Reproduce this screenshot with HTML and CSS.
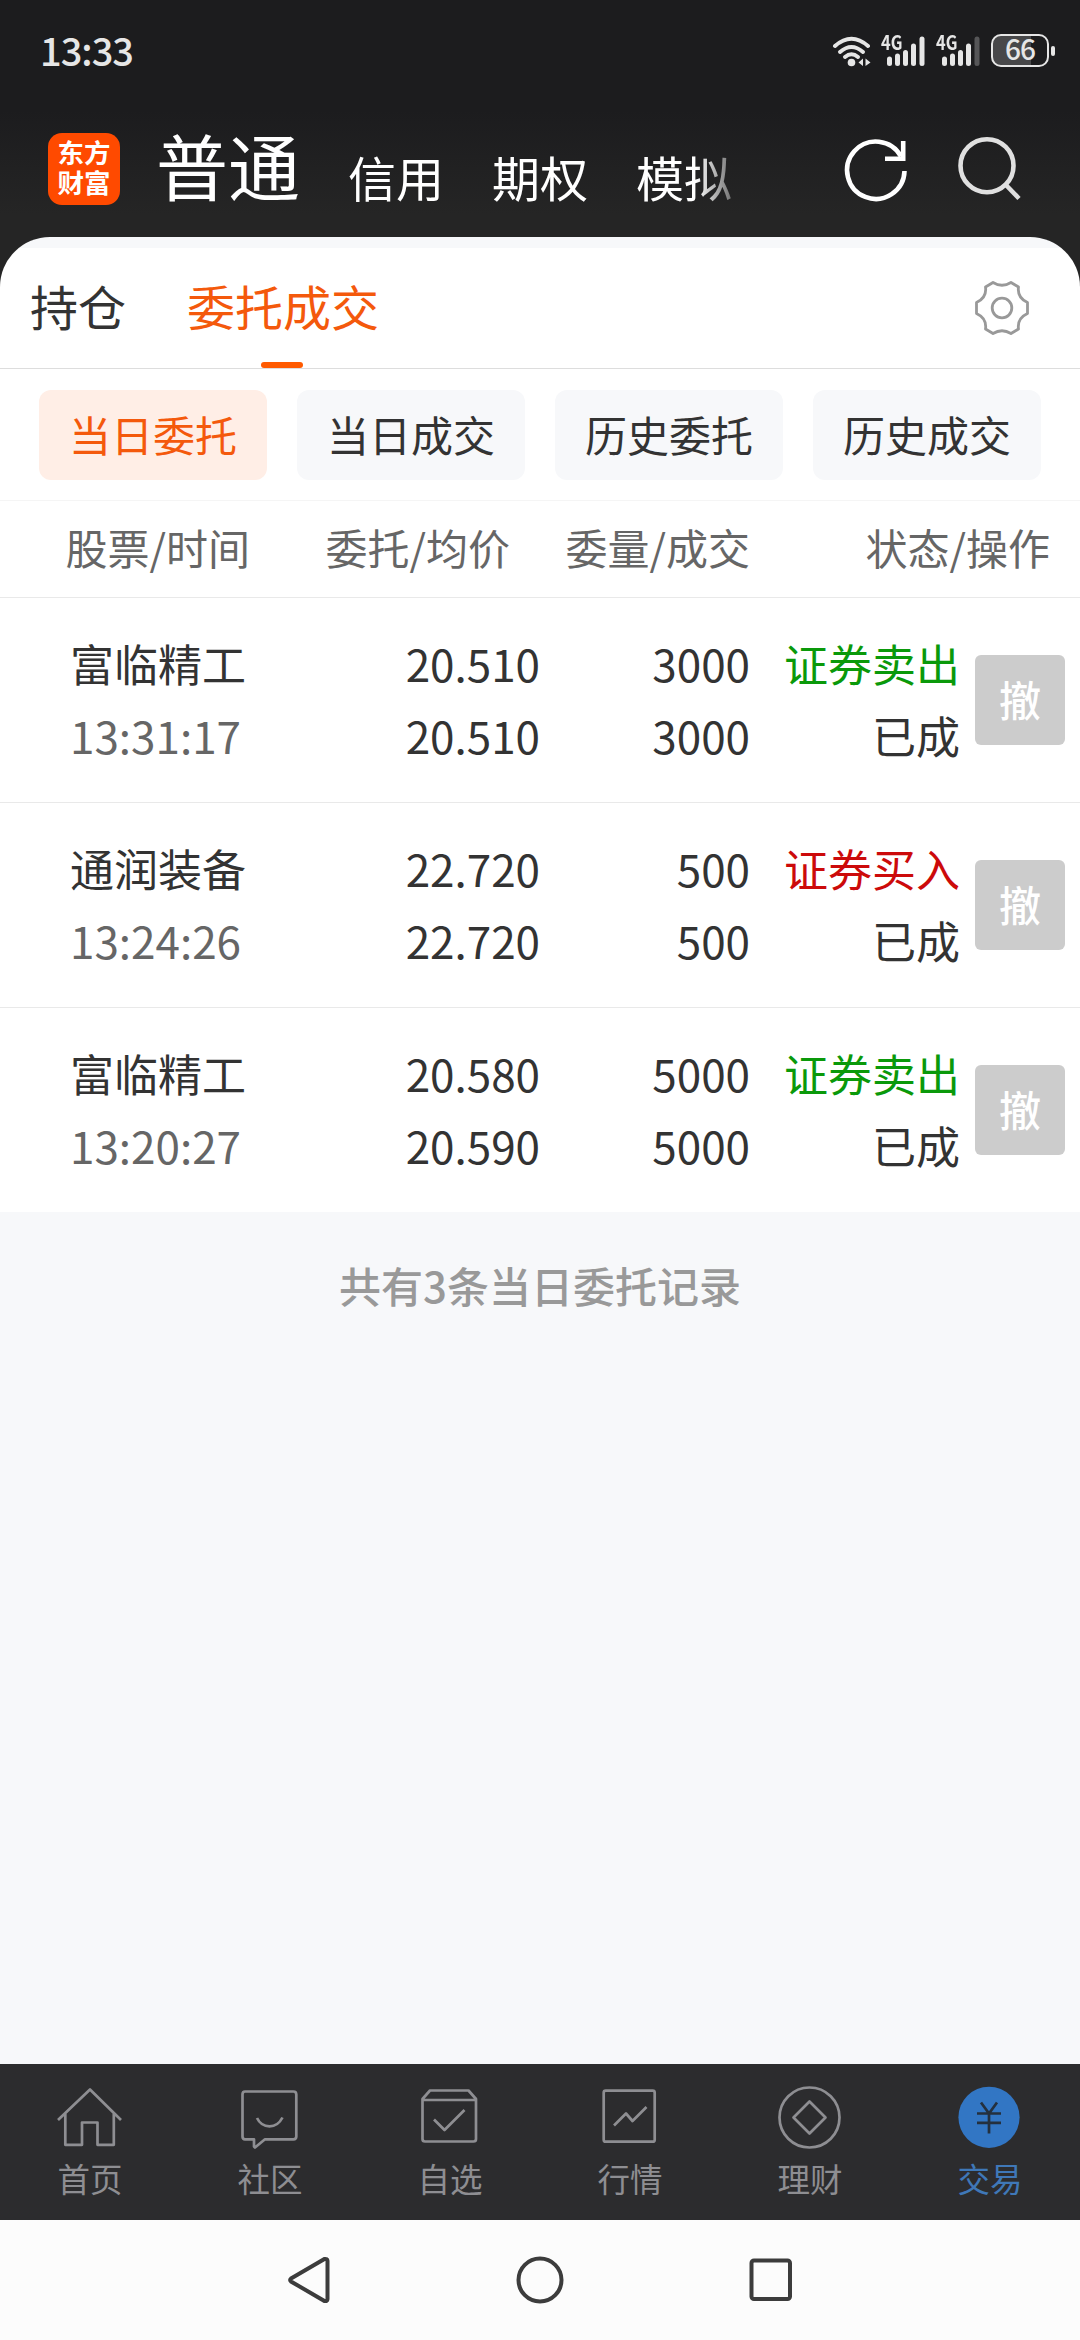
FILE: index.html
```
<!DOCTYPE html>
<html lang="zh-CN">
<head>
    <meta charset="UTF-8">
    <meta name="viewport" content="width=device-width, initial-scale=1.0">
    <title>委托成交</title>
    <link rel="stylesheet" href="styles.css">
</head>
<body>
    <div class="screen">
        <!-- Status bar and account tabs -->
        <div class="top">
            <div class="status-bar">
                <span class="clock">13:33</span>
                <div class="status-icons">
                    <svg class="wifi" width="40" height="32" viewBox="0 0 40 32" fill="none" stroke="#e6e6e6" stroke-width="4" stroke-linecap="round">
                        <path d="M3 11Q19.500 -3.500 36 11"/>
                        <path d="M8 17Q19.500 7 31 17"/>
                        <path d="M13 22Q19.500 16.500 26 22"/>
                        <circle cx="19.500" cy="27.500" r="3.800" fill="#e6e6e6" stroke="none"/>
                        <path d="M31 23.500v7.500l-4.500-3.500zM33.500 23.500v7.500l5-3.500z" fill="#e6e6e6" stroke="none"/>
                    </svg>
                    <div class="signal">
                        <span class="net">4G</span>
                        <svg width="46" height="32" viewBox="0 0 46 32" fill="#e6e6e6">
                            <rect x="7" y="21.500" width="5" height="9.500" rx="2.500"/>
                            <rect x="15" y="18.500" width="5" height="12.500" rx="2.500"/>
                            <rect x="23" y="15" width="5" height="16" rx="2.500"/>
                            <rect x="31" y="8.500" width="5" height="22.500" rx="2.500"/>
                            <rect x="39.500" y="1.500" width="5" height="29.500" rx="2.500"/>
                        </svg>
                    </div>
                    <div class="signal">
                        <span class="net">4G</span>
                        <svg width="46" height="32" viewBox="0 0 46 32" fill="#e6e6e6">
                            <rect x="7" y="21.500" width="5" height="9.500" rx="2.500"/>
                            <rect x="15" y="18.500" width="5" height="12.500" rx="2.500"/>
                            <rect x="23" y="15" width="5" height="16" rx="2.500"/>
                            <rect x="31" y="8.500" width="5" height="22.500" rx="2.500"/>
                            <rect x="39.500" y="1.500" width="5" height="29.500" rx="2.500" fill="#565658"/>
                        </svg>
                    </div>
                    <div class="battery">66</div>
                    <div class="battery-tip"></div>
                </div>
            </div>
            <div class="account-bar">
                <div class="logo">东方<br>财富</div>
                <div class="accounts">
                    <span class="account current">普通</span>
                    <span class="account">信用</span>
                    <span class="account">期权</span>
                    <span class="account">模拟</span>
                </div>
                <svg class="refresh" width="72" height="72" viewBox="0 0 72 72" fill="none" stroke="#fff" stroke-width="4.600">
                    <path d="M64.500 37A28.700 28.700 0 1 1 61 22.500"/>
                    <path d="M63.200 7v18M45 24.800h20.500"/>
                </svg>
                <svg class="search" width="72" height="72" viewBox="0 0 72 72" fill="none" stroke="#e0e0e0" stroke-width="4.600">
                    <circle cx="33" cy="31.700" r="26.500"/>
                    <path d="M51.500 50.500L65 64.500"/>
                </svg>
            </div>
        </div>

        <div class="sheet">
            <div class="tabs">
                <span class="tab">持仓</span>
                <span class="tab active">委托成交</span>
                <svg class="gear" width="60" height="60" viewBox="0 0 60 60" fill="none" stroke="#999" stroke-width="2.800" stroke-linejoin="round">
                    <path d="M21 4.500Q30 10 39 4.500L46.500 9C45.500 16 48 21 55.500 24.500V35.500C48 39 45.500 44 46.500 51L39 55.500Q30 50 21 55.500L13.500 51C14.500 44 12 39 4.500 35.500V24.500C12 21 14.500 16 13.500 9Z"/>
                    <circle cx="30" cy="30" r="9.800"/>
                </svg>
            </div>

            <div class="filters">
                <button type="button" class="filter selected">当日委托</button>
                <button type="button" class="filter">当日成交</button>
                <button type="button" class="filter">历史委托</button>
                <button type="button" class="filter">历史成交</button>
            </div>

            <div class="list-head">
                <span>股票/时间</span>
                <span>委托/均价</span>
                <span>委量/成交</span>
                <span>状态/操作</span>
            </div>

            <!-- Orders -->
            <div class="order">
                <div class="stock">富临精工<br><span class="time">13:31:17</span></div>
                <div class="price">20.510<br>20.510</div>
                <div class="amount">3000<br>3000</div>
                <div class="state"><span class="sell">证券卖出</span><br>已成</div>
                <button type="button" class="cancel">撤</button>
            </div>
            <div class="order">
                <div class="stock">通润装备<br><span class="time">13:24:26</span></div>
                <div class="price">22.720<br>22.720</div>
                <div class="amount">500<br>500</div>
                <div class="state"><span class="buy">证券买入</span><br>已成</div>
                <button type="button" class="cancel">撤</button>
            </div>
            <div class="order">
                <div class="stock">富临精工<br><span class="time">13:20:27</span></div>
                <div class="price">20.580<br>20.590</div>
                <div class="amount">5000<br>5000</div>
                <div class="state"><span class="sell">证券卖出</span><br>已成</div>
                <button type="button" class="cancel">撤</button>
            </div>
        </div>

        <div class="summary">共有3条当日委托记录</div>

        <!-- Bottom navigation -->
        <div class="nav">
            <div class="nav-item">
                <svg width="72" height="72" viewBox="0 0 72 72">
                    <path d="M4 38L36 7.500L67 38M11.300 31V62.800H28V40.500H43.500V62.800H59.800V31"/>
                </svg>
                <span>首页</span>
            </div>
            <div class="nav-item">
                <svg width="72" height="72" viewBox="0 0 72 72">
                    <path d="M11 9.500H59.500Q62.300 9.500 62.300 12.500V54.500Q62.300 57.300 59.500 57.300H31L21 65.500L20 64.500V57.300H11Q8.500 57.300 8.500 54.500V12.500Q8.500 9.500 11 9.500Z"/>
                    <path d="M23 36Q27 44.300 35.500 44.300T48.500 35.500"/>
                </svg>
                <span>社区</span>
            </div>
            <div class="nav-item">
                <svg width="72" height="72" viewBox="0 0 72 72">
                    <path d="M8.500 17L16 8.500H54.500L62 17V57Q62 59.500 59.500 59.500H11Q8.500 59.500 8.500 57ZM8.500 18H62"/>
                    <path d="M20 37.500L30.500 48L50.500 28"/>
                </svg>
                <span>自选</span>
            </div>
            <div class="nav-item">
                <svg width="72" height="72" viewBox="0 0 72 72">
                    <rect x="9.700" y="8.700" width="51" height="51" rx="2"/>
                    <path d="M20 43.500L32 31.500L38.500 39L52.500 25"/>
                </svg>
                <span>行情</span>
            </div>
            <div class="nav-item">
                <svg width="72" height="72" viewBox="0 0 72 72">
                    <circle cx="35.500" cy="35.500" r="30"/>
                    <path d="M35.500 19.500L51.500 35.500L35.500 51.500L19.500 35.500Z"/>
                </svg>
                <span>理财</span>
            </div>
            <div class="nav-item on">
                <svg width="72" height="72" viewBox="0 0 72 72">
                    <circle class="coin" cx="35" cy="35.300" r="30.600"/>
                    <path class="yuan" d="M27 20.500L35 31.500L43 20.500M23 31.500H47M23 40.800H47M35 31.500V51.500"/>
                </svg>
                <span>交易</span>
            </div>
        </div>

        <!-- System keys -->
        <div class="keys">
            <svg width="48" height="52" viewBox="0 0 48 52"><path d="M6 24.500L39.500 5Q42.300 4.500 42.500 7V45Q42.300 47.500 39.500 47L6 27.500Q4.200 26 6 24.500Z"/></svg>
            <svg width="52" height="52" viewBox="0 0 52 52"><circle cx="26" cy="26" r="21.500"/></svg>
            <svg width="48" height="52" viewBox="0 0 48 52"><rect x="4.500" y="6.500" width="38.500" height="38.500" rx="2.500"/></svg>
        </div>
    </div>
</body>
</html>
```
FILE: styles.css
```
* {
    box-sizing: border-box;
}

body {
    margin: 0;
    font-family: "Noto Sans CJK SC", "Noto Sans", sans-serif;
    color: #333;
    background-color: #f7f8fa;
}

svg {
    display: block;
    flex: none;
}

button {
    font-family: inherit;
    border: none;
    padding: 0 0 3px;
}

.screen {
    width: 1080px;
    height: 2340px;
    display: flex;
    flex-direction: column;
    overflow: hidden;
    background: linear-gradient(#1c1c1e 110px, #252525 215px, #252525 300px, #f7f8fa 300px);
}

/* Header */
.top {
    height: 237px;
}

.status-bar {
    height: 101px;
    padding: 0 25px 0 40px;
    display: flex;
    justify-content: space-between;
    align-items: center;
}

.clock {
    padding-bottom: 2px;
    font-size: 38px;
    line-height: 50px;
    color: #e6e6e6;
    font-weight: 500;
    letter-spacing: -1px;
}

.status-icons {
    display: flex;
    align-items: center;
}

.wifi {
    margin-right: 8px;
}

.signal {
    position: relative;
    margin-right: 9px;
}

.net {
    position: absolute;
    left: 1px;
    top: -3px;
    font-size: 20px;
    font-weight: 700;
    line-height: 20px;
    color: #e6e6e6;
    transform: scaleX(0.82);
    transform-origin: left;
}

.battery {
    width: 58px;
    height: 33px;
    margin-left: 1px;
    border: 2px solid #e6e6e6;
    border-radius: 10px;
    background: linear-gradient(90deg, #48484a 38px, #1c1c1e 38px);
    color: #e6e6e6;
    font-size: 28px;
    font-weight: 500;
    line-height: 25px;
    letter-spacing: -1px;
    text-align: center;
}

.battery-tip {
    width: 4px;
    height: 10px;
    margin-left: 2px;
    border-radius: 2px;
    background-color: #e6e6e6;
}

.account-bar {
    height: 136px;
    padding-left: 48px;
    display: flex;
    align-items: flex-start;
    color: #fff;
}

.logo {
    width: 72px;
    height: 72px;
    margin-top: 32px;
    padding-top: 4px;
    border-radius: 14px;
    background-color: #ff4a00;
    font-size: 26.5px;
    font-weight: 700;
    line-height: 30px;
    text-align: center;
}

.accounts {
    width: 612px;
    margin-left: 36px;
    display: flex;
    align-items: flex-start;
    gap: 48px;
    -webkit-mask-image: linear-gradient(90deg, #000 540px, transparent 596px);
    mask-image: linear-gradient(90deg, #000 540px, transparent 596px);
}

.account {
    font-size: 48px;
    line-height: 151px;
}

.account.current {
    font-size: 72px;
    line-height: 126px;
}

.refresh {
    margin: 33px 0 0 72px;
}

.search {
    margin: 33px 0 0 42px;
}

/* Tabs */
.sheet {
    border-radius: 50px 50px 0 0;
    background: linear-gradient(#f7f8fa 11px, #fff 11px);
}

.tabs {
    height: 132px;
    padding: 10px 48px 0 30px;
    display: flex;
    align-items: center;
    border-bottom: 1px solid #ddd;
}

.tab {
    position: relative;
    margin-right: 61px;
    padding-bottom: 5px;
    font-size: 48px;
    line-height: 116px;
}

.tab.active {
    color: #f4590c;
}

.tab.active::after {
    content: "";
    position: absolute;
    left: 74px;
    bottom: 0;
    width: 42px;
    height: 6px;
    border-radius: 3px;
    background-color: #ff5a00;
}

.gear {
    margin-left: auto;
}

.filters {
    height: 131px;
    padding: 21px 39px 0;
    display: flex;
    gap: 30px;
}

.filter {
    width: 228px;
    height: 90px;
    border-radius: 12px;
    background-color: #f7f8fa;
    color: #333;
    font-size: 42px;
}

.filter.selected {
    background-color: #ffeee6;
    color: #f4590c;
}

/* Order list */
.list-head {
    height: 98px;
    display: grid;
    grid-template-columns: 250px 260px 240px 300px;
    border-top: 1px solid #f5f5f5;
    border-bottom: 1px solid #e9e9e9;
    color: #666;
    font-size: 42px;
    line-height: 92px;
    text-align: right;
}

.order {
    height: 205px;
    display: grid;
    grid-template-columns: 270px 200px 210px 210px 90px;
    align-items: center;
    padding-left: 70px;
    border-bottom: 1px solid #e9e9e9;
    font-size: 44px;
    line-height: 72px;
    text-align: right;
}

.order:last-child {
    height: 204px;
    border-bottom: none;
}

.order > div {
    padding-bottom: 3px;
}

.order .stock {
    text-align: left;
}

.time {
    color: #666;
}

.sell {
    color: #0a990a;
}

.buy {
    color: #cc0a0a;
}

.cancel {
    width: 90px;
    height: 90px;
    margin-left: 15px;
    border-radius: 6px;
    background-color: #ccc;
    color: #fff;
    font-size: 42px;
    font-weight: 500;
}

.summary {
    flex: 1;
    padding-top: 43px;
    background-color: #f7f8fa;
    color: #999;
    font-size: 42px;
    font-weight: 500;
    line-height: 60px;
    text-align: center;
}

/* Bottom navigation */
.nav {
    height: 156px;
    display: flex;
    background-color: #2c2c2e;
}

.nav-item {
    width: 180px;
    padding-top: 18px;
    display: flex;
    flex-direction: column;
    align-items: center;
    color: #8e8e92;
    font-size: 32.5px;
    line-height: 48px;
}

.nav-item svg {
    fill: none;
    stroke: #8e8e92;
    stroke-width: 2.7;
    stroke-linejoin: round;
}

.nav-item.on {
    color: #3f78b8;
}

.nav-item .coin {
    fill: #3276c4;
    stroke: none;
}

.nav-item .yuan {
    stroke: #24303e;
    stroke-linejoin: miter;
}

.keys {
    height: 120px;
    display: flex;
    justify-content: center;
    align-items: center;
    gap: 181px;
    background-color: #fcfcfc;
}

.keys svg {
    fill: none;
    stroke: #3c3c3c;
    stroke-width: 4;
}
```
